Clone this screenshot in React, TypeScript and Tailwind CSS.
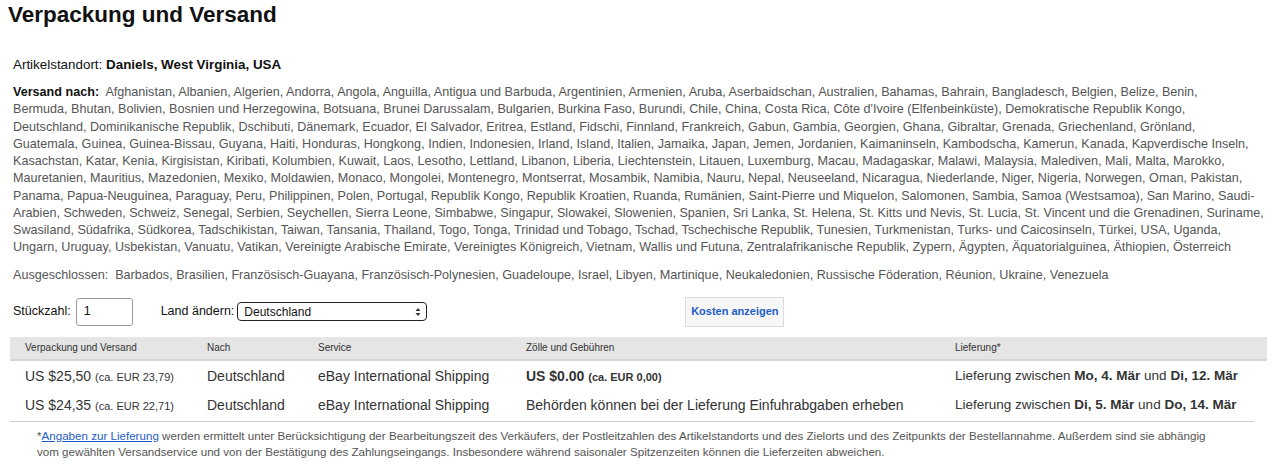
import React from "react";

const shipLines = [
  "Afghanistan, Albanien, Algerien, Andorra, Angola, Anguilla, Antigua und Barbuda, Argentinien, Armenien, Aruba, Aserbaidschan, Australien, Bahamas, Bahrain, Bangladesch, Belgien, Belize, Benin,",
  "Bermuda, Bhutan, Bolivien, Bosnien und Herzegowina, Botsuana, Brunei Darussalam, Bulgarien, Burkina Faso, Burundi, Chile, China, Costa Rica, Côte d'Ivoire (Elfenbeinküste), Demokratische Republik Kongo,",
  "Deutschland, Dominikanische Republik, Dschibuti, Dänemark, Ecuador, El Salvador, Eritrea, Estland, Fidschi, Finnland, Frankreich, Gabun, Gambia, Georgien, Ghana, Gibraltar, Grenada, Griechenland, Grönland,",
  "Guatemala, Guinea, Guinea-Bissau, Guyana, Haiti, Honduras, Hongkong, Indien, Indonesien, Irland, Island, Italien, Jamaika, Japan, Jemen, Jordanien, Kaimaninseln, Kambodscha, Kamerun, Kanada, Kapverdische Inseln,",
  "Kasachstan, Katar, Kenia, Kirgisistan, Kiribati, Kolumbien, Kuwait, Laos, Lesotho, Lettland, Libanon, Liberia, Liechtenstein, Litauen, Luxemburg, Macau, Madagaskar, Malawi, Malaysia, Malediven, Mali, Malta, Marokko,",
  "Mauretanien, Mauritius, Mazedonien, Mexiko, Moldawien, Monaco, Mongolei, Montenegro, Montserrat, Mosambik, Namibia, Nauru, Nepal, Neuseeland, Nicaragua, Niederlande, Niger, Nigeria, Norwegen, Oman, Pakistan,",
  "Panama, Papua-Neuguinea, Paraguay, Peru, Philippinen, Polen, Portugal, Republik Kongo, Republik Kroatien, Ruanda, Rumänien, Saint-Pierre und Miquelon, Salomonen, Sambia, Samoa (Westsamoa), San Marino, Saudi-",
  "Arabien, Schweden, Schweiz, Senegal, Serbien, Seychellen, Sierra Leone, Simbabwe, Singapur, Slowakei, Slowenien, Spanien, Sri Lanka, St. Helena, St. Kitts und Nevis, St. Lucia, St. Vincent und die Grenadinen, Suriname,",
  "Swasiland, Südafrika, Südkorea, Tadschikistan, Taiwan, Tansania, Thailand, Togo, Tonga, Trinidad und Tobago, Tschad, Tschechische Republik, Tunesien, Turkmenistan, Turks- und Caicosinseln, Türkei, USA, Uganda,",
  "Ungarn, Uruguay, Usbekistan, Vanuatu, Vatikan, Vereinigte Arabische Emirate, Vereinigtes Königreich, Vietnam, Wallis und Futuna, Zentralafrikanische Republik, Zypern, Ägypten, Äquatorialguinea, Äthiopien, Österreich",
];

const excluded =
  "Barbados, Brasilien, Französisch-Guayana, Französisch-Polynesien, Guadeloupe, Israel, Libyen, Martinique, Neukaledonien, Russische Föderation, Réunion, Ukraine, Venezuela";

export default function App() {
  return (
    <div className="bg-white w-[1280px] h-[471px] overflow-hidden text-[#333] font-['Liberation_Sans',Arial,sans-serif]">
      <h2 className="pl-[8px] pt-[1px] text-[22.5px] leading-[28px] font-bold text-[#111]">
        Verpackung und Versand
      </h2>

      <div className="pl-[13px] pr-[27px]">
        <div className="mt-[27px] text-[13.4px] leading-[17px] text-[#111]">
          Artikelstandort: <span className="font-bold">Daniels, West Virginia, USA</span>
        </div>

        <div className="mt-[11px] text-[12.6px] leading-[17.25px] text-[#555] whitespace-nowrap">
          {shipLines.map((line, i) => (
            <div key={i}>
              {i === 0 && (
                <>
                  <span className="text-[#111] font-bold">Versand nach:</span>&nbsp;{" "}
                </>
              )}
              {line}
            </div>
          ))}
        </div>

        <div className="mt-[10px] text-[12.6px] leading-[17px] text-[#555]">
          Ausgeschlossen:&nbsp; {excluded}
        </div>

        {/* Menge / Land */}
        <div className="mt-[13px] flex items-center text-[12.5px] text-[#111]">
          <span>Stückzahl:</span>
          <div className="ml-[5px] w-[57px] h-[28px] border border-[#999] rounded-[3px] flex items-center pl-[7px]">
            1
          </div>
          <span className="ml-[28px]">Land ändern:</span>
          <div className="ml-[3px] w-[190px] h-[19px] border border-[#222] rounded-[4px] flex items-center justify-between pl-[6px] pr-[5px] text-[12px]">
            <span>Deutschland</span>
            <svg width="6" height="10" viewBox="0 0 6 10">
              <path d="M0.5 4 L3 1 L5.5 4 Z M0.5 6 L3 9 L5.5 6 Z" fill="#333" />
            </svg>
          </div>
          <button className="ml-[258px] h-[30px] w-[99px] bg-[#f7f7f7] border border-[#ddd] text-[11px] font-bold text-[#1e5cc6]">
            Kosten anzeigen
          </button>
        </div>
      </div>

      {/* Tabelle */}
      <div className="mt-[10px] ml-[10px] w-[1257px]">
        <div className="flex h-[24px] items-center bg-[#e5e5e5] border-b-2 border-[#d6d6d6] text-[10px] text-[#333]">
          <div className="w-[182px] pl-[15px]">Verpackung und Versand</div>
          <div className="w-[111px] pl-[15px]">Nach</div>
          <div className="w-[208px] pl-[15px]">Service</div>
          <div className="w-[429px] pl-[15px]">Zölle und Gebühren</div>
          <div className="flex-1 pl-[15px]">Lieferung*</div>
        </div>

        <div className="flex h-[30px] items-center text-[14px] text-[#333] whitespace-nowrap pt-[2px]">
          <div className="w-[182px] pl-[15px]">
            US $25,50 <span className="text-[11px]">(ca. EUR 23,79)</span>
          </div>
          <div className="w-[111px] pl-[15px]">Deutschland</div>
          <div className="w-[208px] pl-[15px]">eBay International Shipping</div>
          <div className="w-[429px] pl-[15px] font-bold">
            US $0.00 <span className="text-[11px]">(ca. EUR 0,00)</span>
          </div>
          <div className="flex-1 pl-[15px] text-[13.5px]">
            Lieferung zwischen <span className="font-bold">Mo, 4. Mär</span> und{" "}
            <span className="font-bold">Di, 12. Mär</span>
          </div>
        </div>

        <div className="flex h-[30px] items-center text-[14px] text-[#333] whitespace-nowrap">
          <div className="w-[182px] pl-[15px]">
            US $24,35 <span className="text-[11px]">(ca. EUR 22,71)</span>
          </div>
          <div className="w-[111px] pl-[15px]">Deutschland</div>
          <div className="w-[208px] pl-[15px]">eBay International Shipping</div>
          <div className="w-[429px] pl-[15px]">
            Behörden können bei der Lieferung Einfuhrabgaben erheben
          </div>
          <div className="flex-1 pl-[15px] text-[13.5px]">
            Lieferung zwischen <span className="font-bold">Di, 5. Mär</span> und{" "}
            <span className="font-bold">Do, 14. Mär</span>
          </div>
        </div>
        <div className="w-[1244px] border-b border-[#ccc]" />
      </div>

      <p className="mt-[6px] pl-[37px] text-[11.6px] leading-[16px] text-[#555] whitespace-nowrap">
        *<a className="text-[#1e5cc6] underline">Angaben zur Lieferung</a> werden ermittelt unter
        Berücksichtigung der Bearbeitungszeit des Verkäufers, der Postleitzahlen des Artikelstandorts
        und des Zielorts und des Zeitpunkts der Bestellannahme. Außerdem sind sie abhängig
        <br />
        vom gewählten Versandservice und von der Bestätigung des Zahlungseingangs. Insbesondere
        während saisonaler Spitzenzeiten können die Lieferzeiten abweichen.
      </p>
    </div>
  );
}
